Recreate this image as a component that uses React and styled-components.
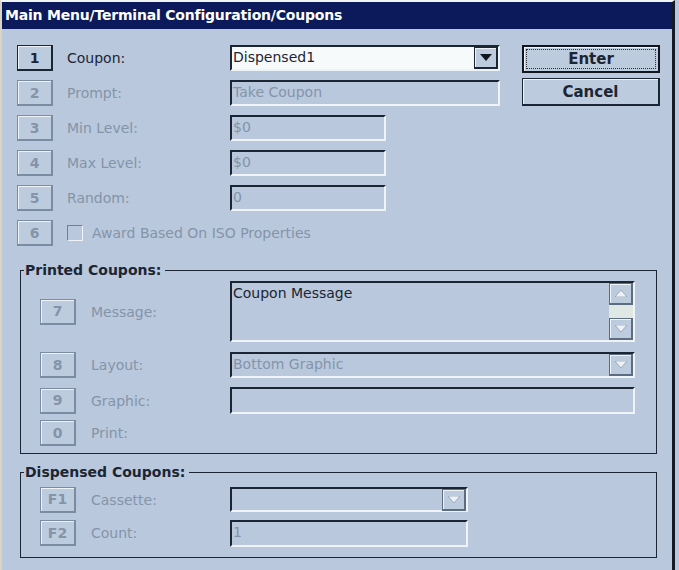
import React from "react";
import styled, { createGlobalStyle, css } from "styled-components";

const DARK = "#1c2533";
const DIM = "#8494a9";
const LIGHT = "#eef3f6";
const BG = "#b9c8dc";

const GlobalStyle = createGlobalStyle`
  html, body {
    margin: 0;
    padding: 0;
    background: ${BG};
  }
  body {
    font-family: "DejaVu Sans", Verdana, sans-serif;
  }
`;

const Window = styled.div`
  box-sizing: border-box;
  width: 675px;
  height: 570px;
  border-top: 2px solid #f2f4f4;
  border-left: 2px solid #d9d4c4;
  border-right: 3px solid #151b26;
  background: ${BG};
  overflow: hidden;
`;

const TitleBar = styled.div`
  height: 27px;
  background: #0c1a5b;
  color: #ffffff;
  font-size: 14px;
  font-weight: bold;
  letter-spacing: -0.2px;
  line-height: 27px;
  padding-left: 3px;
`;

const Top = styled.div`
  display: flex;
  align-items: flex-start;
  padding: 16px 0 0 15px;
`;

const Rows = styled.div`
  display: flex;
  flex-direction: column;
  gap: ${(p) => p.$gap || 0}px;
  margin-left: ${(p) => p.$indent || 0}px;
`;

const Row = styled.div`
  display: flex;
  align-items: center;
  height: ${(p) => p.$h || 26}px;
  margin-top: ${(p) => p.$mt || 0}px;
`;

const Key = styled.div`
  box-sizing: border-box;
  flex: none;
  width: 36px;
  height: 26px;
  display: flex;
  align-items: center;
  justify-content: center;
  font-size: 14px;
  font-weight: bold;
  color: ${(p) => (p.$on ? DARK : DIM)};
  border: 1px solid ${(p) => (p.$on ? DARK : "#7b8ca2")};
  border-right-width: 2px;
  border-bottom-width: 2px;
  box-shadow: inset 1px 1px 0 ${LIGHT};
  background: #bdcbde;
`;

const Label = styled.div`
  flex: none;
  width: ${(p) => p.$w}px;
  margin-left: ${(p) => p.$gap || 14}px;
  font-size: 14px;
  color: ${(p) => (p.$on ? DARK : DIM)};
`;

const Field = styled.div`
  box-sizing: border-box;
  flex: none;
  display: flex;
  width: ${(p) => p.$w}px;
  height: ${(p) => p.$h || 26}px;
  border-style: solid;
  border-width: 2px;
  border-color: ${DARK} ${LIGHT} ${LIGHT} ${DARK};
  background: ${(p) => (p.$white ? "#f7fafa" : "transparent")};
  font-size: 14px;
  line-height: 20px;
  color: ${(p) => (p.$on ? DARK : DIM)};
`;

const FieldText = styled.div`
  flex: 1;
  padding-left: 1px;
  white-space: nowrap;
  overflow: hidden;
`;

const ArrowBtn = styled.div`
  box-sizing: border-box;
  flex: none;
  width: 24px;
  height: 22px;
  display: flex;
  align-items: center;
  justify-content: center;
  background: #bdcbde;
  border: 1px solid ${(p) => (p.$on ? DARK : "#5d6c80")};
  border-right-width: 2px;
  border-bottom-width: 2px;
  box-shadow: inset 1px 1px 0 ${LIGHT};
`;

const ScrollCol = styled.div`
  flex: none;
  display: flex;
  flex-direction: column;
  width: 24px;
`;

const Track = styled.div`
  flex: 1;
  background: #dfe8e4;
`;

const Actions = styled.div`
  display: flex;
  flex-direction: column;
  gap: 5px;
  margin-left: 22px;
`;

const Button = styled.button`
  box-sizing: border-box;
  width: 138px;
  height: 28px;
  padding: 0;
  background: #bdcbde;
  font-family: "DejaVu Sans", Verdana, sans-serif;
  font-size: 15px;
  font-weight: bold;
  color: ${DARK};
  border: 1px solid ${DARK};
  border-right-width: 2px;
  border-bottom-width: 2px;
  box-shadow: inset 1px 1px 0 ${LIGHT};
  ${(p) =>
    p.$default &&
    css`
      border: 2px solid #10151e;
      outline: 1px dotted #2a3240;
      outline-offset: -5px;
    `}
`;

const Check = styled.div`
  box-sizing: border-box;
  flex: none;
  width: 16px;
  height: 16px;
  margin-left: 14px;
  border-style: solid;
  border-width: 1px;
  border-color: #6f7f94 ${LIGHT} ${LIGHT} #6f7f94;
`;

const CheckLabel = styled.div`
  margin-left: 9px;
  font-size: 14px;
  color: ${DIM};
`;

const Group = styled.fieldset`
  box-sizing: border-box;
  width: 637px;
  margin: ${(p) => p.$top}px 0 0 18px;
  padding: ${(p) => p.$pad};
  border: 1px solid ${DARK};
  min-width: 0;
`;

const Legend = styled.legend`
  margin-left: 3px;
  padding: 0 4px 0 1px;
  font-size: 14px;
  font-weight: bold;
  line-height: 17px;
  color: ${DARK};
`;

const Tri = ({ up, on }) => (
  <svg width="12" height="7" viewBox="0 0 12 7">
    <polygon
      points={up ? "0,7 12,7 6,0" : "0,0 12,0 6,7"}
      fill={on ? "#10151e" : "#eef2f6"}
      stroke={on ? "none" : "#7d8ca0"}
      strokeWidth="0.6"
    />
  </svg>
);

export default function App() {
  return (
    <>
      <GlobalStyle />
      <Window>
        <TitleBar>Main Menu/Terminal Configuration/Coupons</TitleBar>

        <Top>
          <Rows $gap={9}>
            <Row>
              <Key $on>1</Key>
              <Label $on $w={163}>Coupon:</Label>
              <Field $w={270} $white $on>
                <FieldText>Dispensed1</FieldText>
                <ArrowBtn $on>
                  <Tri on />
                </ArrowBtn>
              </Field>
            </Row>
            <Row>
              <Key>2</Key>
              <Label $w={163}>Prompt:</Label>
              <Field $w={270}>
                <FieldText>Take Coupon</FieldText>
              </Field>
            </Row>
            <Row>
              <Key>3</Key>
              <Label $w={163}>Min Level:</Label>
              <Field $w={156}>
                <FieldText>$0</FieldText>
              </Field>
            </Row>
            <Row>
              <Key>4</Key>
              <Label $w={163}>Max Level:</Label>
              <Field $w={156}>
                <FieldText>$0</FieldText>
              </Field>
            </Row>
            <Row>
              <Key>5</Key>
              <Label $w={163}>Random:</Label>
              <Field $w={156}>
                <FieldText>0</FieldText>
              </Field>
            </Row>
            <Row>
              <Key>6</Key>
              <Check />
              <CheckLabel>Award Based On ISO Properties</CheckLabel>
            </Row>
          </Rows>
          <Actions>
            <Button $default>Enter</Button>
            <Button>Cancel</Button>
          </Actions>
        </Top>

        <Group $top={16} $pad="2px 0 7px 0">
          <Legend>Printed Coupons:</Legend>
          <Rows $indent={19}>
            <Row $h={61}>
              <Key>7</Key>
              <Label $w={139} $gap={15}>Message:</Label>
              <Field $w={405} $h={61} $on>
                <FieldText>Coupon Message</FieldText>
                <ScrollCol>
                  <ArrowBtn>
                    <Tri up />
                  </ArrowBtn>
                  <Track />
                  <ArrowBtn>
                    <Tri />
                  </ArrowBtn>
                </ScrollCol>
              </Field>
            </Row>
            <Row $mt={10}>
              <Key>8</Key>
              <Label $w={139} $gap={15}>Layout:</Label>
              <Field $w={405}>
                <FieldText>Bottom Graphic</FieldText>
                <ArrowBtn>
                  <Tri />
                </ArrowBtn>
              </Field>
            </Row>
            <Row $h={27} $mt={9}>
              <Key>9</Key>
              <Label $w={139} $gap={15}>Graphic:</Label>
              <Field $w={405} $h={27}>
                <FieldText />
              </Field>
            </Row>
            <Row $mt={6}>
              <Key>0</Key>
              <Label $w={139} $gap={15}>Print:</Label>
            </Row>
          </Rows>
        </Group>

        <Group $top={9.5} $pad="6.5px 0 11px 0">
          <Legend>Dispensed Coupons:</Legend>
          <Rows $indent={19}>
            <Row $h={25}>
              <Key>F1</Key>
              <Label $w={139} $gap={15}>Cassette:</Label>
              <Field $w={238} $h={25}>
                <FieldText />
                <ArrowBtn>
                  <Tri />
                </ArrowBtn>
              </Field>
            </Row>
            <Row $mt={8}>
              <Key>F2</Key>
              <Label $w={139} $gap={15}>Count:</Label>
              <Field $w={238} $h={27}>
                <FieldText>1</FieldText>
              </Field>
            </Row>
          </Rows>
        </Group>
      </Window>
    </>
  );
}
